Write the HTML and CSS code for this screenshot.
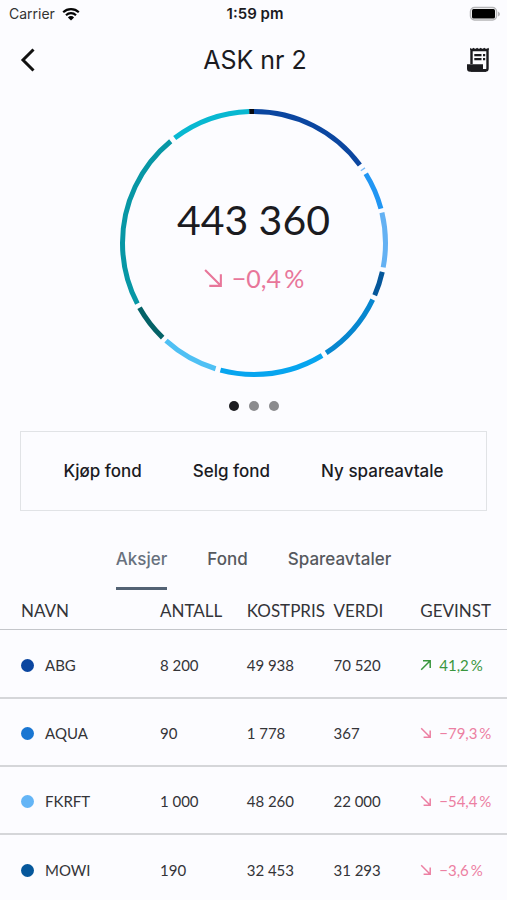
FILE: index.html
```html
<!DOCTYPE html>
<html lang="nb">
<head>
<meta charset="utf-8">
<meta name="viewport" content="width=device-width, initial-scale=1">
<title>ASK nr 2</title>
<link rel="stylesheet" href="styles.css">
</head>
<body>
<svg class="sprite" aria-hidden="true">
  <symbol id="down" viewBox="0 0 20 20"><path d="M2 2L17 17M17 6V17H6"/></symbol>
  <symbol id="up" viewBox="0 0 20 20"><path d="M2 18L17 3M5 3H17V15"/></symbol>
</svg>

<div class="status">
  <div class="carrier">
    <span>Carrier</span>
    <svg class="wifi" viewBox="0 0 18 14" aria-hidden="true">
      <path d="M1.2 5.2A11.2 11.2 0 0 1 16.800 5.200M4 8.200A7.200 7.200 0 0 1 14 8.200"/>
      <path class="solid" d="M9 13.500L5.900 10.400A4.400 4.400 0 0 1 12.100 10.400Z"/>
    </svg>
  </div>
  <time class="clock">1:59 pm</time>
  <svg class="battery" viewBox="0 0 32 16" aria-hidden="true">
    <rect class="shell" x="1.500" y="1.500" width="26" height="12.500" rx="4"/>
    <rect x="3" y="3" width="23" height="9.500" rx="1.500"/>
    <path class="tip" d="M29 5.500Q31 6.500 31 8T29 10.500Z"/>
  </svg>
</div>

<header class="bar">
  <button class="icon-button" type="button" aria-label="Tilbake">
    <svg class="back" viewBox="0 0 16 24" aria-hidden="true"><path d="M13.500 1.500L3 12L13.500 22.500"/></svg>
  </button>
  <h1 class="title">ASK nr 2</h1>
  <button class="icon-button end" type="button" aria-label="Transaksjoner">
    <svg class="receipt" viewBox="0 0 24 26" aria-hidden="true">
      <path class="outline" d="M5.500 17V3H21.500V21.500Q21.500 23.500 19.500 23.500H5"/>
      <path class="teeth" d="M4.200 3V.8L5.800 2.300L7.500.8L9.300 2.300L11.100.8L12.900 2.300L14.700.8L16.500 2.300L18.300.8L20.100 2.300L22.700.8V3Z"/>
      <path d="M1 17.200H17V22H20V24.800H4Q1 24.800 1 21.500Z"/>
      <path d="M8.300 7H15.500V9.200H8.300ZM8.300 11H15.500V13.200H8.300ZM17 7H19.200V9.200H17ZM17 11H19.200V13.200H17Z"/>
    </svg>
  </button>
</header>

<main>
  <section class="chart">
    <svg class="ring" viewBox="0 0 270 270" role="img" aria-label="Fordeling">
      <g transform="rotate(-90 135 135)">
        <circle cx="135" cy="135" r="131.500" pathLength="360" stroke="#0b46a0" stroke-dasharray="53.600 400"/>
        <circle cx="135" cy="135" r="131.500" pathLength="360" stroke="#7dbcf8" stroke-dasharray=".6 400" stroke-dashoffset="-55.600"/>
        <circle cx="135" cy="135" r="131.500" pathLength="360" stroke="#2196f3" stroke-dasharray="16.600 400" stroke-dashoffset="-58.200"/>
        <circle cx="135" cy="135" r="131.500" pathLength="360" stroke="#64b1f3" stroke-dasharray="24.100 400" stroke-dashoffset="-76.600"/>
        <circle cx="135" cy="135" r="131.500" pathLength="360" stroke="#05579b" stroke-dasharray="10.700 400" stroke-dashoffset="-102.700"/>
        <circle cx="135" cy="135" r="131.500" pathLength="360" stroke="#0787d0" stroke-dasharray="31.200 400" stroke-dashoffset="-115.500"/>
        <circle cx="135" cy="135" r="131.500" pathLength="360" stroke="#07a5ef" stroke-dasharray="46 400" stroke-dashoffset="-148.800"/>
        <circle cx="135" cy="135" r="131.500" pathLength="360" stroke="#4fc0f4" stroke-dasharray="25 400" stroke-dashoffset="-197"/>
        <circle cx="135" cy="135" r="131.500" pathLength="360" stroke="#046267" stroke-dasharray="16.500 400" stroke-dashoffset="-224"/>
        <circle cx="135" cy="135" r="131.500" pathLength="360" stroke="#0797a5" stroke-dasharray="78.200 400" stroke-dashoffset="-242.500"/>
        <circle cx="135" cy="135" r="131.500" pathLength="360" stroke="#08b8d1" stroke-dasharray="35 400" stroke-dashoffset="-322.900"/>
        <circle cx="135" cy="135" r="131.500" pathLength="360" stroke="#080a10" stroke-dasharray="2.100 400" stroke-dashoffset="-357.900"/>
      </g>
    </svg>
    <div class="summary">
      <p class="total">443&#8197;360</p>
      <p class="change"><svg class="arrow" aria-hidden="true"><use href="#down"/></svg>−0,4&#8201;%</p>
    </div>
  </section>

  <div class="dots" aria-hidden="true"><span class="dot current"></span><span class="dot"></span><span class="dot"></span></div>

  <div class="actions">
    <button type="button">Kjøp fond</button>
    <button type="button">Selg fond</button>
    <button type="button">Ny spareavtale</button>
  </div>

  <nav class="tabs">
    <button class="active" type="button">Aksjer</button>
    <button type="button">Fond</button>
    <button type="button">Spareavtaler</button>
  </nav>

  <table class="holdings">
    <thead>
      <tr><th class="name" scope="col">NAVN</th><th scope="col">ANTALL</th><th scope="col">KOSTPRIS</th><th scope="col">VERDI</th><th scope="col">GEVINST</th></tr>
    </thead>
    <tbody>
      <tr><td class="name"><span class="swatch abg"></span>ABG</td><td>8&#8197;200</td><td>49&#8197;938</td><td>70&#8197;520</td><td class="gain"><svg class="arrow" aria-hidden="true"><use href="#up"/></svg>41,2&#8201;%</td></tr>
      <tr><td class="name"><span class="swatch aqua"></span>AQUA</td><td>90</td><td>1&#8197;778</td><td>367</td><td class="loss"><svg class="arrow" aria-hidden="true"><use href="#down"/></svg>−79,3&#8201;%</td></tr>
      <tr><td class="name"><span class="swatch fkrft"></span>FKRFT</td><td>1&#8197;000</td><td>48&#8197;260</td><td>22&#8197;000</td><td class="loss"><svg class="arrow" aria-hidden="true"><use href="#down"/></svg>−54,4&#8201;%</td></tr>
      <tr><td class="name"><span class="swatch mowi"></span>MOWI</td><td>190</td><td>32&#8197;453</td><td>31&#8197;293</td><td class="loss"><svg class="arrow" aria-hidden="true"><use href="#down"/></svg>−3,6&#8201;%</td></tr>
    </tbody>
  </table>
</main>
</body>
</html>
```

FILE: styles.css
```css
* { box-sizing: border-box; }

body {
  margin: 0;
  background: #fcfcff;
  color: #1b1b1f;
  font-family: Inter, "Liberation Sans", sans-serif;
}

button {
  padding: 0;
  border: 0;
  background: none;
  color: inherit;
  font: inherit;
}

svg { display: block; }

.sprite {
  position: absolute;
  width: 0;
  height: 0;
}

.status {
  display: grid;
  grid-template-columns: 1fr auto 1fr;
  align-items: center;
  height: 27px;
  padding: 0 6px 0 9px;
  font-size: 14px;
}

.carrier {
  display: flex;
  align-items: center;
  gap: 7px;
  color: #333;
}

.wifi {
  width: 18px;
  height: 14px;
  fill: none;
  stroke: #050505;
  stroke-width: 2.2;
}

.wifi .solid { fill: #050505; stroke: none; }

.clock {
  font-size: 15px;
  font-weight: 600;
}

.battery {
  width: 32px;
  height: 16px;
  justify-self: end;
}

.battery .shell { fill: #fff; stroke: #b5b5b8; stroke-width: 1.5; }
.battery .tip { fill: #b5b5b8; }

.bar {
  display: grid;
  grid-template-columns: 1fr auto 1fr;
  align-items: center;
  height: 65px;
  padding: 0 17px 0 20px;
}

.title {
  margin: 0;
  font-size: 25px;
  line-height: 32px;
  font-weight: 400;
}

.icon-button { justify-self: start; }
.icon-button.end { justify-self: end; }

.back {
  width: 16px;
  height: 24px;
  fill: none;
  stroke: #111;
  stroke-width: 3;
}

.receipt {
  width: 24px;
  height: 26px;
  fill: #1b1b1f;
}

.receipt .outline { fill: none; stroke: #1b1b1f; stroke-width: 2.4; }

.chart {
  display: grid;
  place-items: center;
  padding: 16px 0 23px;
}

.chart > * { grid-area: 1 / 1; }

.ring {
  width: 270px;
  height: 270px;
}

.ring circle {
  fill: none;
  stroke-width: 5;
}

.summary {
  padding-top: 6px;
  font-family: Lato, sans-serif;
  text-align: center;
}

.summary p { margin: 0; }

.total {
  font-size: 41px;
  line-height: 64px;
}

.change {
  display: flex;
  align-items: center;
  justify-content: center;
  gap: 8px;
  color: #e8769a;
  font-size: 25px;
  line-height: 52px;
}

.arrow {
  fill: none;
  stroke: currentColor;
  stroke-width: 2;
}

.change .arrow { width: 21px; height: 21px; }

.dots {
  display: flex;
  justify-content: center;
  gap: 10px;
  margin-bottom: 20px;
}

.dot {
  width: 10px;
  height: 10px;
  border-radius: 50%;
  background: #8b8b8e;
}

.dot.current { background: #1b1b1f; }

.actions {
  display: flex;
  justify-content: center;
  gap: 51px;
  height: 80px;
  margin: 0 20px;
  border: 1px solid #e1e3e6;
  font-size: 17px;
  font-weight: 500;
}

.tabs {
  display: flex;
  justify-content: center;
  gap: 40px;
  height: 64px;
  margin-top: 15px;
  color: #56595e;
  font-size: 17px;
  font-weight: 500;
}

.tabs button {
  padding-top: 5px;
  border-bottom: 3px solid transparent;
}

.tabs .active {
  border-color: #536274;
  color: #68717e;
}

.holdings {
  width: 100%;
  table-layout: fixed;
  border-spacing: 0;
  color: #343438;
  font-family: Lato, sans-serif;
  font-size: 15px;
}

.holdings th,
.holdings td {
  padding: 2px 0 0;
  text-align: left;
  white-space: nowrap;
}

.holdings th {
  height: 40px;
  border-bottom: 1px solid #c4c6ca;
  font-size: 17px;
  font-weight: 400;
}

.holdings td {
  height: 68px;
  border-bottom: 2px solid #d5d6d9;
}

.holdings tbody tr:first-child td { height: 69px; }
.holdings tr:last-child td { border-bottom: 0; }

.holdings .name {
  width: 160px;
  padding-left: 21px;
}

.swatch {
  display: inline-block;
  width: 13px;
  height: 13px;
  margin-right: 11px;
  border-radius: 50%;
  vertical-align: -1px;
}

.abg { background: #0b46a0; }
.aqua { background: #1976d2; }
.fkrft { background: #64b5f6; }
.mowi { background: #05579b; }

.holdings .arrow {
  display: inline-block;
  width: 12px;
  height: 12px;
  margin-right: 7px;
  stroke-width: 2.5;
  vertical-align: 0;
}

.gain { color: #3a963e; }
.loss { color: #ec7fa2; }
```
